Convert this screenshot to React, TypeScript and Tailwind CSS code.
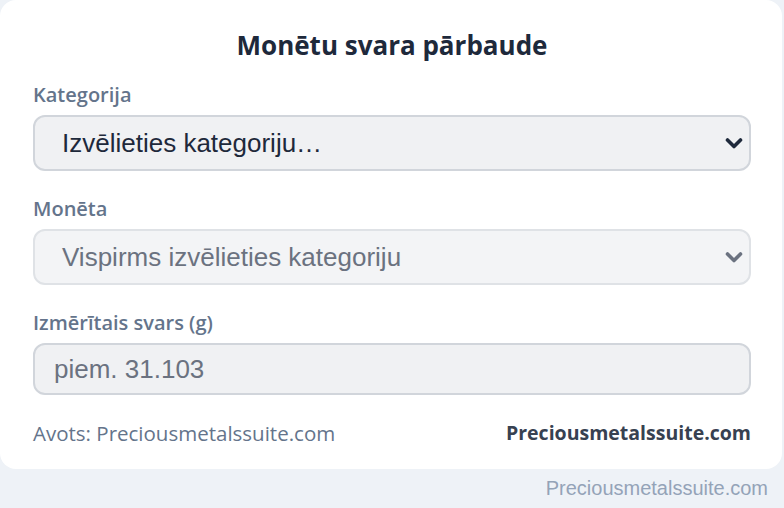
import React from "react";

function Chevron({ className }: { className: string }) {
  return (
    <svg viewBox="0 0 18 13" className={className} fill="none" stroke="currentColor" strokeWidth="3.6" strokeLinecap="round" strokeLinejoin="round">
      <path d="M2.5 3 9 9.5 15.5 3" />
    </svg>
  );
}

export default function App() {
  return (
    <div className="min-h-[508px] w-[784px] bg-[#eef2f7]" style={{ fontFamily: "'Open Sans', 'Liberation Sans', sans-serif" }}>
      <div className="w-[782px] rounded-2xl bg-white pb-[24px] pl-[33px] pr-[31px] pt-[28px]">
        <h1 className="text-center text-[26px] font-bold leading-[34px] text-[#1e293b]">Monētu svara pārbaude</h1>
        <div className="mt-[21px] flex flex-col">
          <label className="text-[20px] font-semibold leading-[24px] text-[#64748b]">Kategorija</label>
          <div className="relative mt-[8px] flex h-[56px] items-center rounded-xl border-2 border-[#d1d5db] bg-[#f0f1f3] pl-[27px] pr-[8px]">
            <span className="text-[26px] text-[#1e293b]" style={{ fontFamily: "'Liberation Sans', Arial, sans-serif" }}>Izvēlieties kategoriju…</span>
            <Chevron className="absolute right-[6px] top-[20px] h-[13px] w-[18px] text-[#1e293b]" />
          </div>
          <label className="mt-[26px] text-[20px] font-semibold leading-[24px] text-[#64748b]">Monēta</label>
          <div className="relative mt-[8px] flex h-[56px] items-center rounded-xl border-2 border-[#dfe2e6] bg-[#f3f4f6] pl-[27px] pr-[8px]">
            <span className="text-[26px] text-[#6b7280]" style={{ fontFamily: "'Liberation Sans', Arial, sans-serif" }}>Vispirms izvēlieties kategoriju</span>
            <Chevron className="absolute right-[6px] top-[20px] h-[13px] w-[18px] text-[#6b7280]" />
          </div>
          <label className="mt-[26px] text-[20px] font-semibold leading-[24px] text-[#64748b]">Izmērītais svars (g)</label>
          <div className="mt-[8px] flex h-[52px] items-center rounded-xl border-2 border-[#d1d5db] bg-[#f0f1f3] pl-[19px]">
            <span className="text-[26px] text-[#6b7280]" style={{ fontFamily: "'Liberation Sans', Arial, sans-serif" }}>piem. 31.103</span>
          </div>
          <div className="mt-[26px] flex items-center justify-between leading-[24px]">
            <span className="text-[20.5px] text-[#64748b]">Avots: Preciousmetalssuite.com</span>
            <span className="text-[19.5px] font-bold text-[#374151]">Preciousmetalssuite.com</span>
          </div>
        </div>
      </div>
      <div className="flex justify-end pr-[16px] pt-[7px] text-[20px] leading-[24px] text-[#94a3b8]" style={{ fontFamily: "'Liberation Sans', Arial, sans-serif" }}>
        Preciousmetalssuite.com
      </div>
    </div>
  );
}
